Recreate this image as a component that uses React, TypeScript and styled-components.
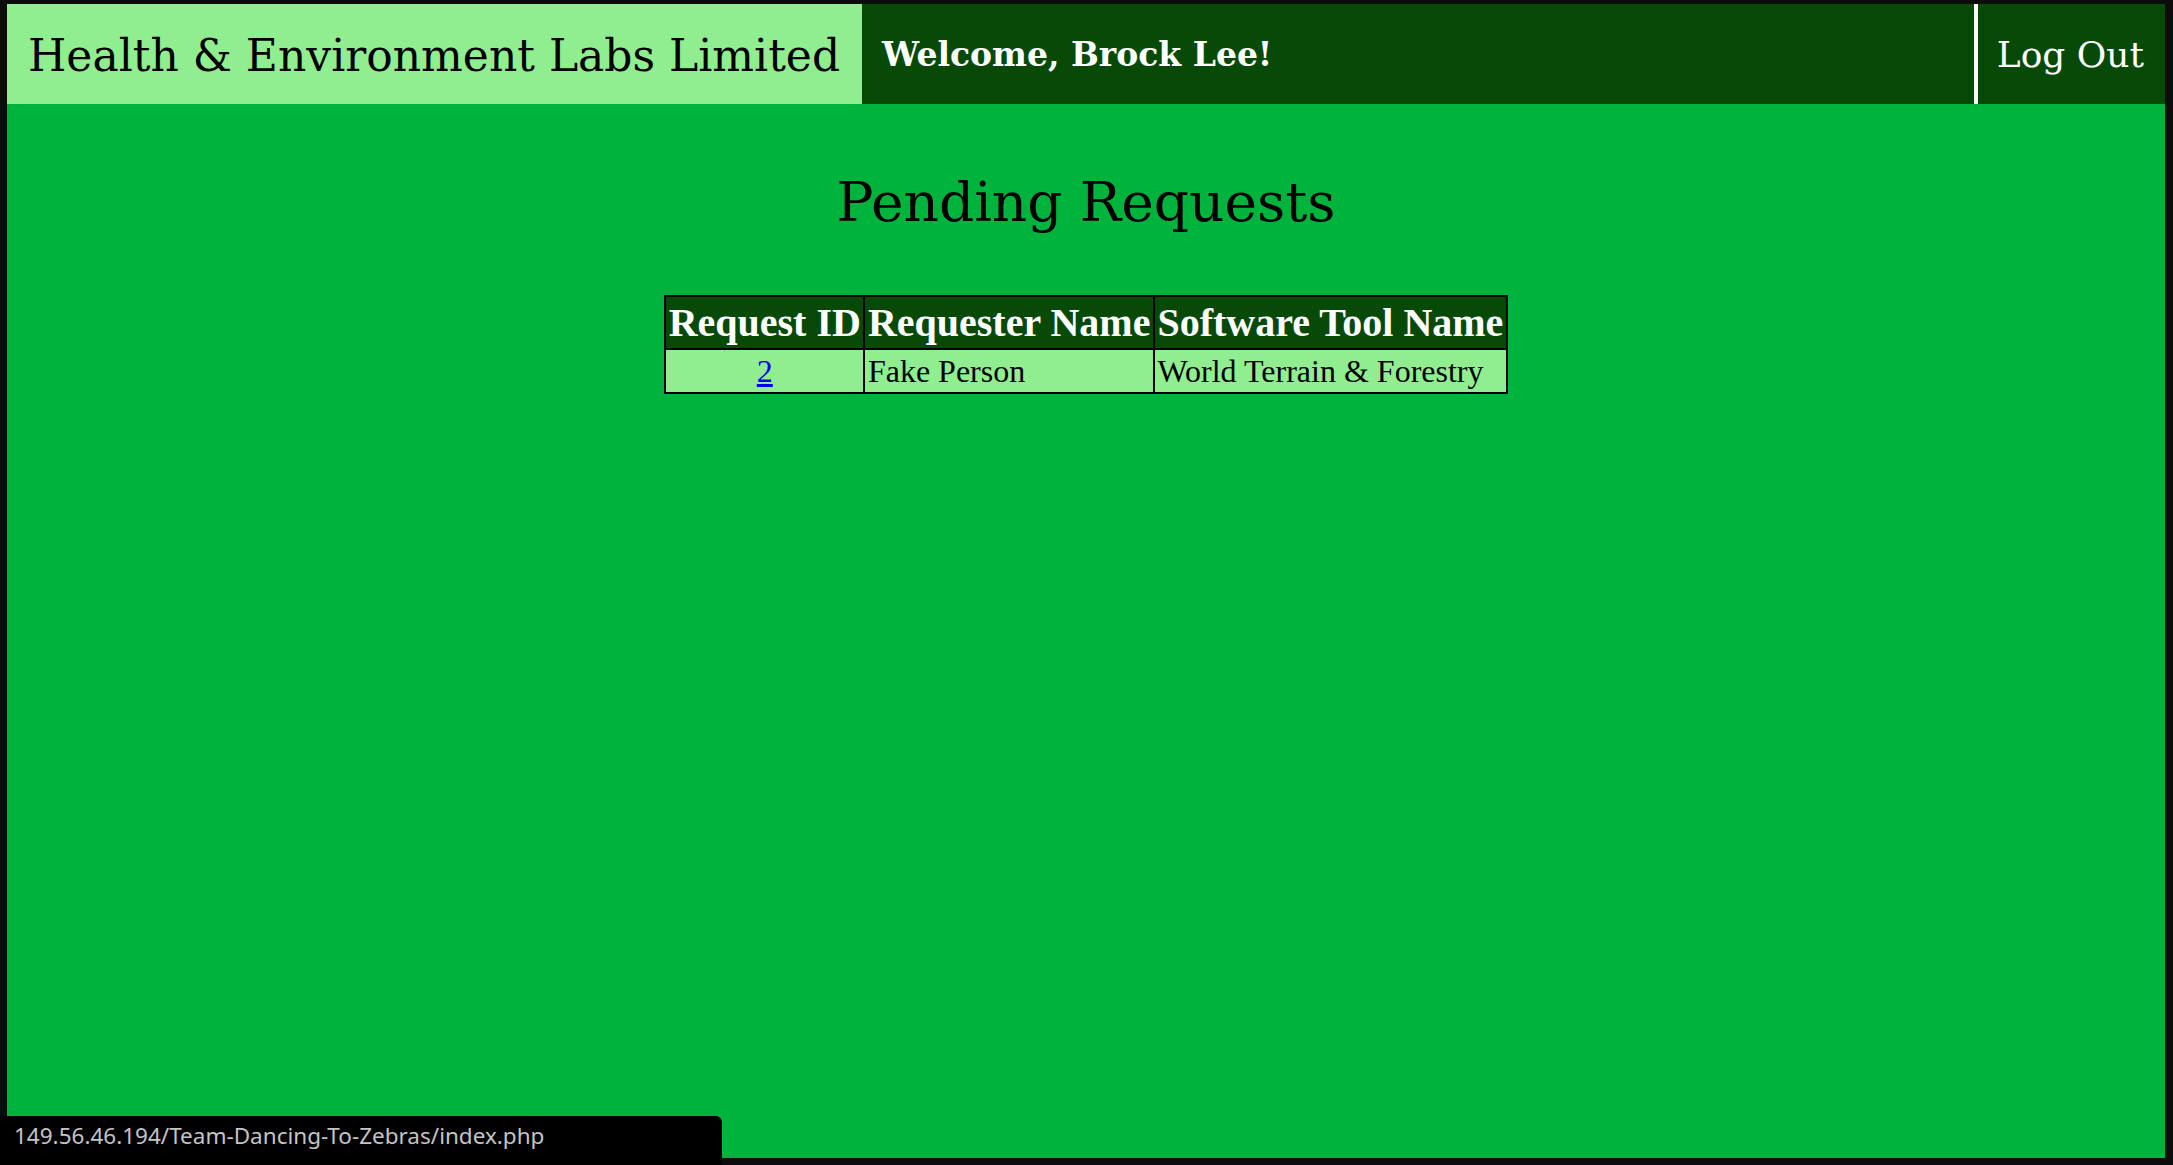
import React from "react";
import styled, { createGlobalStyle } from "styled-components";

const GlobalStyle = createGlobalStyle`
  html, body {
    margin: 0;
    padding: 0;
    background: #0c0c0c;
  }
  body {
    padding: 4px 8px 7px 7px;
    font-family: "DejaVu Serif", serif;
  }
`;

const Page = styled.div`
  display: flex;
  flex-direction: column;
  min-height: 1154px;
  background: #00b33c;
`;

const Header = styled.header`
  display: flex;
  align-items: stretch;
  height: 100px;
`;

const Brand = styled.div`
  display: flex;
  align-items: center;
  padding: 2px 22px 0 21px;
  background: #90ee90;
  color: #000;
  font-family: "DejaVu Serif", serif;
  font-size: 44px;
  white-space: nowrap;
`;

const Welcome = styled.div`
  flex: 1;
  display: flex;
  align-items: center;
  padding-left: 20px;
  background: #074a08;
  color: #fff;
  font-family: "DejaVu Serif", serif;
  font-size: 33px;
  font-weight: 600;
  white-space: nowrap;
`;

const LogOut = styled.a`
  display: flex;
  align-items: center;
  padding: 0 21px 0 19px;
  border-left: 4px solid #fff;
  background: #074a08;
  color: #fff;
  font-family: "DejaVu Serif", serif;
  font-size: 36px;
  text-decoration: none;
  white-space: nowrap;
`;

const Main = styled.main`
  flex: 1;
  display: flex;
  flex-direction: column;
  align-items: center;
`;

const Title = styled.h1`
  margin: 67px 0 61px;
  font-family: "DejaVu Serif", serif;
  font-size: 55px;
  font-weight: normal;
  line-height: 1.15;
  color: #000;
`;

const Table = styled.table`
  border-collapse: collapse;
  border: 2px solid #000;
  font-family: "Liberation Serif", "Times New Roman", serif;
`;

const HeadCell = styled.th`
  padding: 3px 2.5px;
  border: 2px solid #000;
  background: #074a08;
  color: #fff;
  font-size: 40px;
  font-weight: bold;
  line-height: 45px;
  white-space: nowrap;
`;

const Cell = styled.td<{ $center?: boolean }>`
  padding: 3px 2.5px;
  border: 2px solid #000;
  background: #90ee90;
  color: #000;
  font-size: 32px;
  line-height: 36px;
  text-align: ${(p) => (p.$center ? "center" : "left")};
  white-space: nowrap;
`;

const IdLink = styled.a`
  color: #0000ee;
  text-decoration: underline;
`;

const StatusBar = styled.div`
  position: fixed;
  left: 0;
  bottom: 0;
  width: 722px;
  height: 49px;
  box-sizing: border-box;
  padding: 6px 0 0 14px;
  background: #000;
  border-top-right-radius: 6px;
  color: #c4c4c4;
  font-family: "Noto Sans", "Open Sans", sans-serif;
  font-size: 22.5px;
  line-height: 28px;
  white-space: nowrap;
`;

export default function App() {
  return (
    <>
      <GlobalStyle />
      <Page>
        <Header>
          <Brand>Health &amp; Environment Labs Limited</Brand>
          <Welcome>Welcome, Brock Lee!</Welcome>
          <LogOut href="#">Log Out</LogOut>
        </Header>
        <Main>
          <Title>Pending Requests</Title>
          <Table>
            <thead>
              <tr>
                <HeadCell>Request ID</HeadCell>
                <HeadCell>Requester Name</HeadCell>
                <HeadCell>Software Tool Name</HeadCell>
              </tr>
            </thead>
            <tbody>
              <tr>
                <Cell $center>
                  <IdLink href="#">2</IdLink>
                </Cell>
                <Cell>Fake Person</Cell>
                <Cell>World Terrain &amp; Forestry</Cell>
              </tr>
            </tbody>
          </Table>
        </Main>
      </Page>
      <StatusBar>149.56.46.194/Team-Dancing-To-Zebras/index.php</StatusBar>
    </>
  );
}
